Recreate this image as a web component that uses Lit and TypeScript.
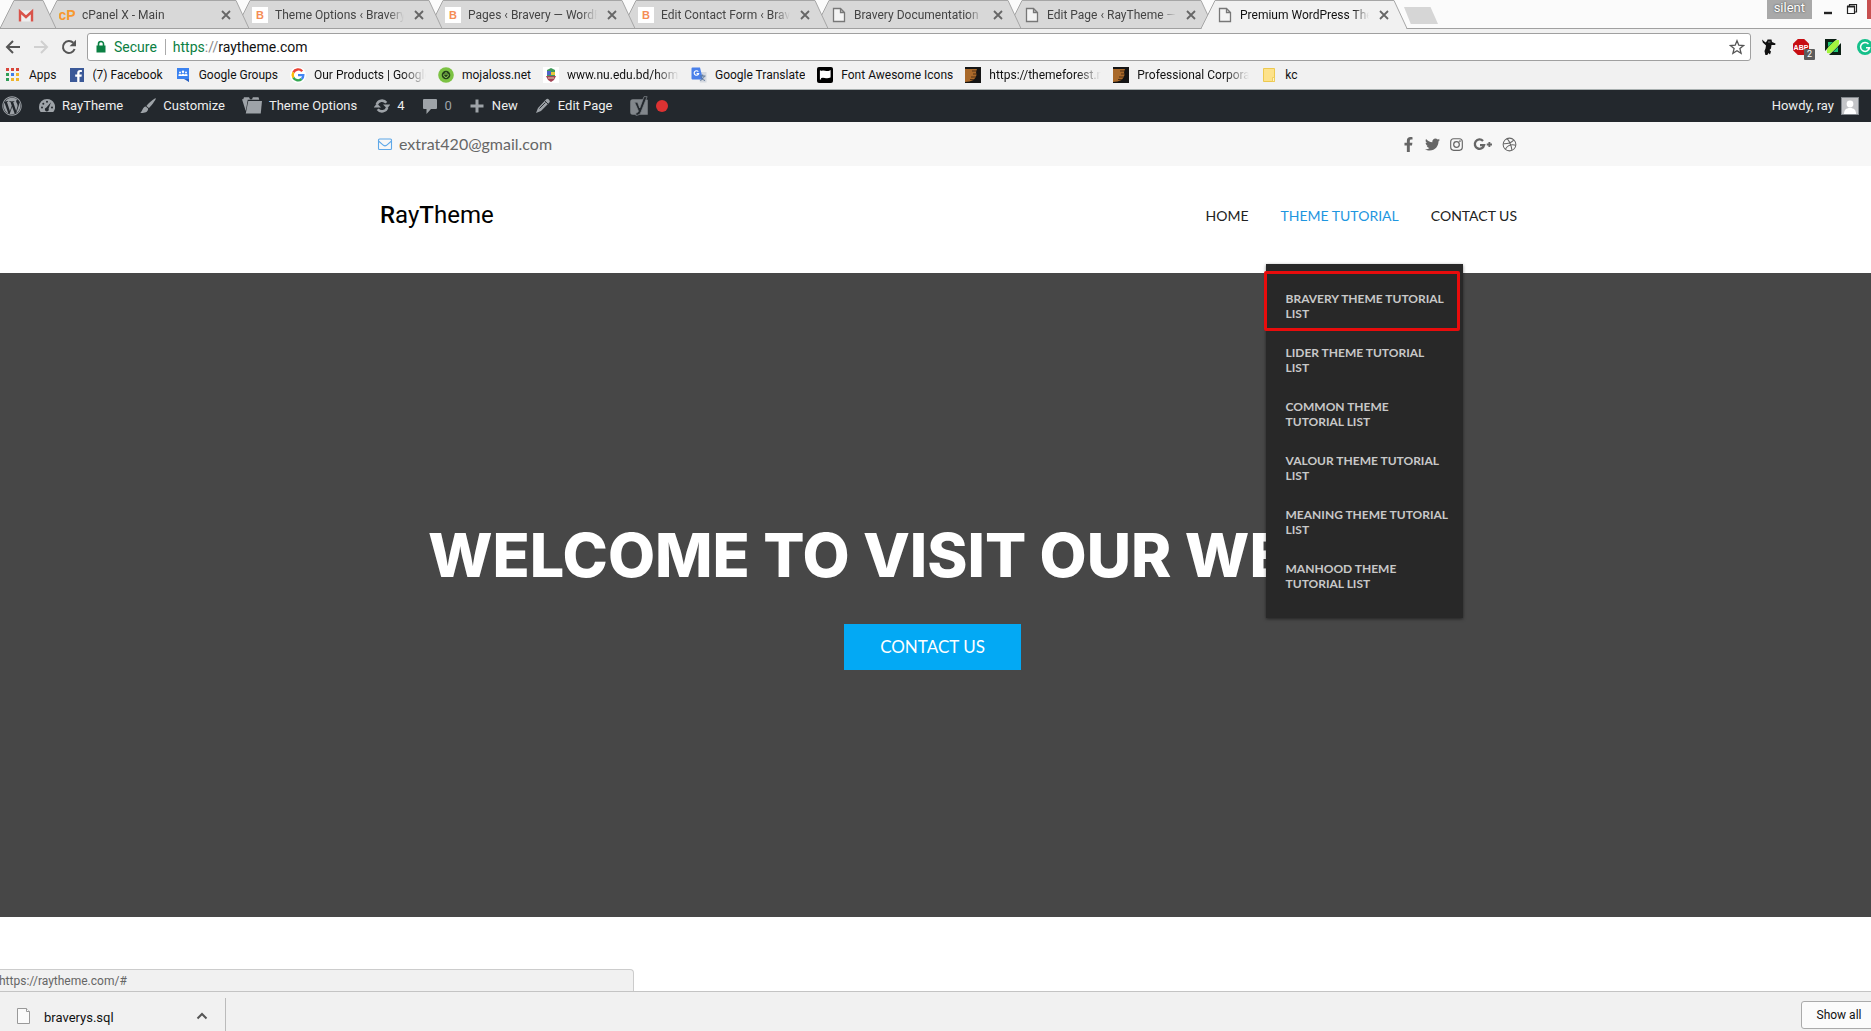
import { LitElement, html, svg, css, nothing } from "lit";
import { customElement, property } from "lit/decorators.js";
import { classMap } from "lit/directives/class-map.js";

const page = svg`<path d="M2.500 1.500h7l4 4v9h-11z M9.500 1.500v4h4" fill="#f4f4f4" stroke="#777" stroke-width="1.300"/>`;
const bravery = svg`<rect width="16" height="16" fill="#fff"/><text x="8" y="12" text-anchor="middle" font-size="11" font-weight="700" font-family="Liberation Sans, sans-serif" fill="#f58d55">B</text>`;
const forest = svg`<rect width="16" height="16" fill="#151515"/><path d="M0 2h12l-1 3 .5 3-1 2.500-2 2.500-4 1.500L0 15z" fill="#a9692a"/><path d="M7 4h5M8 7h4M6 10h5M5 12.500h4" stroke="#3a230f" stroke-width=".8"/>`;

const icons: Record<string, unknown> = {
  page,
  bravery,
  forest,
  gmail: svg`<path d="M1 2.500h14v11H1z" fill="#eee"/><path d="M2 13.500V3.500l6 5.500 6-5.500v10" fill="none" stroke="#d9534a" stroke-width="2.400"/>`,
  cpanel: svg`<text x="8" y="13" text-anchor="middle" font-size="14" font-weight="700" font-family="Liberation Sans, sans-serif" fill="#f7982f">cP</text>`,
  apps: svg`<g><path d="M1 1h3v3H1zM6 1h3v3H6zM11 1h3v3h-3z" fill="#d8453a"/><path d="M1 6h3v3H1z" fill="#2f9e57"/><path d="M6 6h3v3H6z" fill="#3f7de8"/><path d="M11 6h3v3h-3z" fill="#efb52c"/><path d="M1 11h3v3H1z" fill="#2f9e57"/><path d="M6 11h3v3H6zM11 11h3v3h-3z" fill="#efb52c"/></g>`,
  facebook: svg`<rect x="1" y="1" width="14" height="14" fill="#3b5998"/><path d="M10.500 15V9.700h2l.3-2.200h-2.300V6.200c0-.7.300-1.100 1.200-1.100h1.200v-2c-.3 0-1-.1-1.800-.1-1.800 0-2.900 1.100-2.900 3v1.500h-2v2.200h2V15z" fill="#fff"/>`,
  groups: svg`<path d="M2 1h12v14l-3-3H2z" fill="#3b82f0"/><path d="M9 12h5v3z" fill="#2b62c0"/><circle cx="5" cy="5.500" r="1" fill="#fff"/><circle cx="8" cy="4.800" r="1.200" fill="#fff"/><circle cx="11" cy="5.500" r="1" fill="#fff"/><path d="M3.500 9V7.400l1.500-.4 1.500.4L8 6.600l1.500.8L11 7l1.500.4V9z" fill="#fff"/>`,
  google: svg`<circle cx="8" cy="8" r="8" fill="#fff"/><g fill="none" stroke-width="2.400"><path d="M12.200 4.300A5.300 5.300 0 0 0 3.400 5.400" stroke="#ea4335"/><path d="M3.400 5.400a5.300 5.300 0 0 0 0 5.200" stroke="#fbbc05"/><path d="M3.400 10.600a5.300 5.300 0 0 0 8.200 1.400" stroke="#34a853"/><path d="M11.600 12a5 5 0 0 0 1.700-3.900H8" stroke="#4285f4"/></g>`,
  power: svg`<circle cx="8" cy="8" r="7.800" fill="#7cc243"/><circle cx="8" cy="8" r="4.300" fill="#25401a"/><path d="M6.500 6.600a2.200 2.200 0 1 0 3 0M8 5v3" fill="none" stroke="#9be05c" stroke-width="1"/>`,
  crest: svg`<rect width="16" height="16" fill="#fff"/><path d="M4 3l4-2 4 2v6H4z" fill="#3f9a5a"/><path d="M4 4h4v4H4z" fill="#4d62c8"/><path d="M8 5h4v3H8z" fill="#e8c53a"/><path d="M3 9h10l-2 4-3 2-3-2z" fill="#a34455"/><path d="M5 11h6" stroke="#f0d3b0" stroke-width="1"/>`,
  translate: svg`<path d="M7 5h8.500v10.500H9z" fill="#d5d9e0"/><path d="M1.500.5H9l3 12H1.500a1 1 0 0 1-1-1v-10a1 1 0 0 1 1-1z" fill="#4a80ea"/><path d="M7.300 4.600a2.300 2.300 0 1 0 .4 2H5.600" fill="none" stroke="#fff" stroke-width="1.100"/><path d="M9 9h5.500M11.700 7.500V9M13.300 9c-.5 2-2 3.600-4 4.500M10 10c.8 1.600 2 2.800 4 3.500" stroke="#5f7896" fill="none"/>`,
  flag: svg`<rect width="16" height="16" rx="2" fill="#000"/><path d="M3.500 3.500v9M4 4.500c3-1.500 5 1.300 9-.5v6c-4 1.800-6-1-9 .5z" fill="#fff" stroke="#fff" stroke-width="1.200"/>`,
  folder: svg`<path d="M2.500 1.500h11v13h-11z" fill="#fde28a" stroke="#edc94f"/><path d="M11.500 10.500h2v4h-2z" fill="#fff3c4" stroke="#edc94f" stroke-width=".8"/>`,
  back: svg`<path d="M15 8H2.500M8 2L2 8l6 6" fill="none" stroke="#555" stroke-width="2"/>`,
  forward: svg`<path d="M1 8h12.500M8 2l6 6-6 6" fill="none" stroke="#d0d0d0" stroke-width="2"/>`,
  reload: svg`<path d="M13.600 10A6 6 0 1 1 12.300 3.800" fill="none" stroke="#555" stroke-width="2"/><path d="M15 .8v6.400H8.600z" fill="#555"/>`,
  lock: svg`<rect x="3.500" y="6.500" width="9" height="7" fill="#0b8043"/><path d="M5.500 7V5a2.500 2.500 0 0 1 5 0v2" fill="none" stroke="#0b8043" stroke-width="1.600"/>`,
  star: svg`<path d="M8 1.700l1.800 4.500 4.800.3-3.700 3.100 1.200 4.700L8 11.700l-4.100 2.600 1.200-4.700L1.400 6.500l4.800-.3z" fill="none" stroke="#555" stroke-width="1.300"/>`,
  ninja: svg`<path d="M1 0.500l3.500 3L6 2l.5-1.500h4L11 3l3.500 1.500-.3 1.500-3.700 0-.5 3.500-1.500 1.500 1.500 1.500-1 3-1.500-1.500-1.500 2.500H4.500L3.500 12l1-2.500L5 6.500 1.800 3.500z" fill="#111"/><path d="M7 3h2.500" stroke="#999" stroke-width=".8"/>`,
  abp: svg`<path d="M4.800 0h6.400L16 4.800v6.400L11.200 16H4.800L0 11.200V4.800z" fill="#c70d12"/><text x="8" y="10.500" text-anchor="middle" font-size="7" font-weight="700" font-family="Liberation Sans, sans-serif" fill="#fff">ABP</text>`,
  feather: svg`<path d="M0 0h12L0 12z" fill="#0c2014"/><path d="M16 16H4L16 4z" fill="#0c2014"/><path d="M3 3h5L3 8z" fill="#1ec677"/><path d="M13 13H8l5-5z" fill="#1ec677"/><path d="M2 14c-.5-3 0-4.500 2-6.500L9 2.500C10.500 1 12 1 14 1c.3 3 0 5-2 7l-5 5c-1.500 1.500-3 1.500-5 1z" fill="#a4f53e"/>`,
  grammarly: svg`<circle cx="8" cy="8" r="8" fill="#15c08a"/><path d="M11.500 5a4.500 4.500 0 1 0 1 3.800H9M11 11l1.500-2.200" fill="none" stroke="#fff" stroke-width="1.500"/>`,
  minimize: svg`<path d="M4 12h8" stroke="#222" stroke-width="2.400"/>`,
  restore: svg`<path d="M3.500 5.500h7v7h-7zM5.500 5V3.500h7v7.500h-2" fill="none" stroke="#222" stroke-width="1.200"/><path d="M3 5.500h8" stroke="#222" stroke-width="2"/>`,
  close: svg`<path d="M4 4l8 8M12 4l-8 8" stroke="#666" stroke-width="1.800"/>`,
  chevron: svg`<path d="M3.500 10.500L8 6l4.500 4.500" fill="none" stroke="#555" stroke-width="2"/>`,
  sheet: svg`<path d="M1.500.5h9l3 3v12h-12z" fill="#fafafa" stroke="#999"/><path d="M10.500.5v3h3" fill="#fff" stroke="#999"/>`,
  dashboard: svg`<path d="M8 1a8 8 0 0 0-8 8c0 2 .7 3.800 1.700 5h12.600A8 8 0 0 0 8 1z" fill="#9ea3a8"/><g fill="#23282d"><circle cx="3" cy="9.500" r="1"/><circle cx="4.300" cy="5.800" r="1"/><circle cx="8" cy="3.800" r="1"/><circle cx="13" cy="9.500" r="1"/><path d="M12 4.300L9.600 10.500a2 2 0 1 1-2.200-1z"/></g>`,
  brush: svg`<path d="M15.800.3c.6.8-5.300 8.600-7 9.700L6.400 8C7.400 6.300 15-.5 15.800.3z" fill="#9ea3a8"/><path d="M5.700 8.600l2.400 2c.2 3-3 5.200-7.800 4.200C2.600 13.500 2.500 9 5.700 8.600z" fill="#9ea3a8"/>`,
  portfolio: svg`<path d="M0 2.500h1l.6-1.500h4l.8 1.500H8l.7-1.500h4.500l.6 2H4.600L3 12z" fill="#9ea3a8"/><path d="M5 4h11l-1 10H3z" fill="#9ea3a8"/>`,
  update: svg`<g fill="none" stroke="#9ea3a8" stroke-width="2.600"><path d="M2.800 6.500a5.400 5.400 0 0 1 9.500-1.700"/><path d="M13.200 9.500a5.400 5.400 0 0 1-9.500 1.700"/></g><path d="M9 6.500h7.500L13 10.500zM7 9.500H-.5L3 5.500z" fill="#9ea3a8"/>`,
  comment: svg`<path d="M2 1h12a1 1 0 0 1 1 1v8a1 1 0 0 1-1 1H9l-4.500 5V11H2a1 1 0 0 1-1-1V2a1 1 0 0 1 1-1z" fill="#9ea3a8"/>`,
  plus: svg`<path d="M8 1.500v13M1.500 8h13" stroke="#9ea3a8" stroke-width="3"/>`,
  pencil: svg`<path d="M11 1.500c1-1 2.200-.8 3 .2 1 .9 1.200 2 .2 3L6 13l-5 2 2-5z" fill="#9ea3a8"/><path d="M10 3l3 3M4.500 10.500l6-6" stroke="#23282d" stroke-width=".9"/>`,
  yoast: svg`<path d="M3 2.500h8.500L15 3v12H3a2 2 0 0 1-2-2V4.500a2 2 0 0 1 2-2z" fill="#82878c"/><path d="M12 .5h2.500L9.700 12.500c-.8 2-1.800 3-4.200 3v-2c1.300-.1 1.900-.8 2-1.600L4.500 5h2.300l1.800 4.600z" fill="#23282d" stroke="#82878c" stroke-width=".6"/>`,
  avatar: svg`<rect width="16" height="16" fill="#c3c4c7"/><circle cx="8" cy="6" r="3.400" fill="#fff"/><path d="M2 16c0-4 2-6 6-6s6 2 6 6z" fill="#fff"/>`,
  mail: svg`<rect x="1.500" y="3" width="13" height="10.500" rx="1" fill="none" stroke="#5fa8e8" stroke-width="1.100"/><path d="M1.500 5l5 4.300c1 .8 2 .8 3 0l5-4.300" fill="none" stroke="#5fa8e8" stroke-width="1.100"/>`,
  instagram: svg`<rect x="1.800" y="1.800" width="12.400" height="12.400" rx="3.200" fill="none" stroke="#666" stroke-width="1.200"/><circle cx="8" cy="8" r="3" fill="none" stroke="#666" stroke-width="1.300"/><circle cx="11.700" cy="4.300" r=".9" fill="#666"/>`,
  dribbble: svg`<g fill="none" stroke="#666" stroke-width="1.100"><circle cx="8" cy="8" r="6.800"/><path d="M5.500 1.800c2.700 3.200 4.400 7 5 12M1.300 7.200c4.400.2 8-.6 11.200-3.900M3.600 13C5.700 9.200 9.800 7.500 14.700 8.700"/></g>`,
};

const large: Record<string, { box: string; body: unknown }> = {
  wordpress: {
    box: "0 0 512 512",
    body: svg`<path fill="#9ea3a8" d="M61.700 169.400l101.500 278C92.200 413 43.300 340.200 43.300 256c0-30.900 6.600-60.100 18.400-86.600zm337.900 75.900c0-26.300-9.400-44.500-17.500-58.700-10.800-17.500-20.900-32.400-20.900-49.900 0-19.600 14.800-37.800 35.700-37.800.9 0 1.800.1 2.800.2-37.900-34.700-88.300-55.900-143.700-55.900-74.300 0-139.700 38.100-177.800 95.900 5 .2 9.700.3 13.700.3 22.200 0 56.700-2.700 56.700-2.700 11.500-.7 12.800 16.200 1.400 17.500 0 0-11.500 1.300-24.300 2l77.500 230.400L249.800 247l-33.100-90.800c-11.500-.7-22.300-2-22.300-2-11.500-.7-10.100-18.200 1.300-17.500 0 0 35.100 2.700 56 2.700 22.200 0 56.700-2.700 56.700-2.700 11.500-.7 12.800 16.200 1.400 17.500 0 0-11.500 1.300-24.300 2l76.900 228.700 21.200-70.900c9-29.400 16-50.500 16-68.700zm-139.900 29.300l-63.800 185.500c19.100 5.600 39.200 8.700 60.100 8.700 24.800 0 48.500-4.300 70.600-12.100-.6-.9-1.100-1.900-1.500-2.900l-65.400-179.200zm183-120.700c.9 6.800 1.400 14 1.400 21.900 0 21.600-4 45.800-16.200 76.200l-65 187.900C426.200 403 468.700 334.500 468.700 256c0-37-9.400-71.800-26-102.100zM504 256c0 136.800-111.300 248-248 248C119.200 504 8 392.700 8 256 8 119.200 119.200 8 256 8c136.700 0 248 111.200 248 248zm-24 0c0-123.700-100.300-224-224-224S32 132.300 32 256s100.300 224 224 224 224-100.300 224-224z"/>`,
  },
  fb: {
    box: "-96 0 512 512",
    body: svg`<path fill="#666" d="M279.140 288l14.220-92.660h-88.910v-60.130c0-25.350 12.420-50.060 52.240-50.060h40.420V6.260S260.430 0 225.360 0c-73.220 0-121.080 44.380-121.080 124.720v70.620H22.890V288h81.390v224h100.170V288z"/>`,
  },
  twitter: {
    box: "0 0 512 512",
    body: svg`<path fill="#666" d="M459.370 151.716c.325 4.548.325 9.097.325 13.645 0 138.720-105.583 298.558-298.558 298.558-59.452 0-114.680-17.219-161.137-47.106 8.447.974 16.568 1.299 25.340 1.299 49.055 0 94.213-16.568 130.274-44.832-46.132-.975-84.792-31.188-98.112-72.772 6.498.974 12.995 1.624 19.818 1.624 9.421 0 18.843-1.300 27.614-3.573-48.081-9.747-84.143-51.980-84.143-102.985v-1.299c13.969 7.797 30.214 12.670 47.431 13.319-28.264-18.843-46.781-51.005-46.781-87.391 0-19.492 5.197-37.360 14.294-52.954 51.655 63.675 129.300 105.258 216.365 109.807-1.624-7.797-2.599-15.918-2.599-24.040 0-57.828 46.782-104.934 104.934-104.934 30.213 0 57.502 12.670 76.670 33.137 23.715-4.548 46.456-13.320 66.599-25.340-7.798 24.366-24.366 44.833-46.132 57.827 21.117-2.273 41.584-8.122 60.426-16.243-14.292 20.791-32.161 39.308-52.628 54.253z"/>`,
  },
  gplus: {
    box: "0 0 20 16",
    body: svg`<path d="M10 4.200A5 5 0 1 0 11.200 8.600H6.800" fill="none" stroke="#666" stroke-width="2.500"/><path d="M16.800 5.300v5.400M14 8h5.600" stroke="#666" stroke-width="2"/>`,
  },
};

const icon = (name: string, cls = "icon") => {
  const big = large[name];
  return html`<svg class=${cls} viewBox=${big ? big.box : "0 0 16 16"} aria-hidden="true">${big ? big.body : icons[name]}</svg>`;
};

interface Tab { icon: string; label?: string; active?: boolean }

const tabs: Tab[] = [
  { icon: "gmail" },
  { icon: "cpanel", label: "cPanel X - Main" },
  { icon: "bravery", label: "Theme Options ‹ Bravery" },
  { icon: "bravery", label: "Pages ‹ Bravery — WordPress" },
  { icon: "bravery", label: "Edit Contact Form ‹ Bravery" },
  { icon: "page", label: "Bravery Documentation" },
  { icon: "page", label: "Edit Page ‹ RayTheme —" },
  { icon: "page", label: "Premium WordPress Theme", active: true },
];

const bookmarks: [string, string][] = [
  ["apps", "Apps"],
  ["facebook", "(7) Facebook"],
  ["groups", "Google Groups"],
  ["google", "Our Products | Google"],
  ["power", "mojaloss.net"],
  ["crest", "www.nu.edu.bd/home"],
  ["translate", "Google Translate"],
  ["flag", "Font Awesome Icons"],
  ["forest", "https://themeforest.net"],
  ["forest", "Professional Corporate"],
  ["folder", "kc"],
];

const tutorials = [
  ["Bravery Theme Tutorial", "List"],
  ["Lider Theme Tutorial", "List"],
  ["Common Theme", "Tutorial List"],
  ["Valour Theme Tutorial", "List"],
  ["Meaning Theme Tutorial", "List"],
  ["Manhood Theme", "Tutorial List"],
];

const base = css`
  * { box-sizing: border-box; }
  :host { display: block; }
  a { color: inherit; text-decoration: none; }
  button { font: inherit; color: inherit; background: none; border: 0; padding: 0; }
  .icon { width: 16px; height: 16px; flex: none; display: block; }
`;

const system = css`
  :host { font: 12px/16px Roboto, "Noto Sans", sans-serif; color: #111; }
`;

@customElement("browser-tab")
class BrowserTab extends LitElement {
  @property({ attribute: false }) tab!: Tab;

  static styles = [base, system, css`
    :host { height: 29px; flex: 0 1 206px; min-width: 0; margin-right: -13px; position: relative; }
    :host([pinned]) { flex: 0 0 56px; }
    .shape { position: absolute; inset: 0; width: 100%; height: 100%; overflow: visible; }
    .row { position: relative; display: flex; align-items: center; gap: 7px; height: 100%; padding: 0 15px 0 16px; }
    .pinned { justify-content: center; padding: 2px 4px 0 0; }
    .label { flex: 1; min-width: 0; overflow: hidden; white-space: nowrap; color: #444; -webkit-mask: linear-gradient(to left, transparent, #000 16px); mask: linear-gradient(to left, transparent, #000 16px); }
    .active .label { color: #111; }
  `];

  render() {
    const { icon: name, label, active } = this.tab;
    const w = label ? 206 : 56;
    return html`
      <svg class="shape" viewBox="0 0 ${w} 29" preserveAspectRatio="none" aria-hidden="true">
        <path d="M0 28.500L14 .5H${w - 13}L${w} 28.500" fill=${active ? "#f1f1f1" : "#d8d8d8"} stroke="#a6a6a6"></path>
        ${active ? svg`<path d="M1 29H${w - 1}" stroke="#f1f1f1" stroke-width="2"/>` : svg`<path d="M0 28.500H${w}" stroke="#a0a0a0"/>`}
      </svg>
      <div class=${classMap({ row: true, pinned: !label, active: !!active })}>
        ${icon(name)}
        ${label ? html`<span class="label">${label}</span><button aria-label="Close tab">${icon("close")}</button>` : nothing}
      </div>`;
  }
}

@customElement("browser-chrome")
class BrowserChrome extends LitElement {
  static styles = [base, system, css`
    :host { background: #f1f1f1; border-bottom: 1px solid #a9b0b0; }
    .tabs { display: flex; height: 29px; background: #fbfbfb; border-bottom: 1px solid #a0a0a0; }
    .strip { display: flex; flex: 0 1 1420px; min-width: 0; height: 29px; }
    .strip browser-tab { z-index: var(--layer); }
    .new { width: 34px; height: 17px; margin: 7px 0 0 -16px; background: #d6d6d6; clip-path: polygon(0 0, 78% 0, 100% 100%, 20% 100%); }
    .window { display: flex; margin-left: auto; align-items: flex-start; }
    .user { background: #a9a9a9; color: #fff; text-shadow: 0 0 2px #333; font-size: 13px; padding: 0 7px 3px; }
    .window .ctl { margin: 1px 0 0 8px; }
    .shut { width: 4px; height: 19px; margin-left: 7px; background: #c75050; }
    .bar { display: flex; align-items: center; padding-top: 4px; height: 32px; }
    .nav { display: flex; gap: 12px; padding: 0 10px 0 5px; }
    .omni { flex: 1; display: flex; align-items: center; height: 28px; background: #fff; border: 1px solid #a0a0a0; border-radius: 3px; font-size: 14px; padding: 0 5px; }
    .secure { color: #0b8043; margin-left: 5px; padding-right: 8px; border-right: 1px solid #aaa; }
    .scheme { color: #0b8043; margin-left: 7px; }
    .sep { color: #888; }
    .url { flex: 1; min-width: 0; border: 0; padding: 0; font: inherit; color: #111; outline: none; background: none; }
    .ext { display: flex; gap: 16px; padding-left: 10px; width: 120px; overflow: hidden; height: 28px; align-items: center; }
    .ext button { position: relative; }
    .count { position: absolute; right: -6px; bottom: -5px; background: #5c5c5c; color: #fff; font-size: 9px; line-height: 11px; padding: 0 3px; border-radius: 1px; }
    .marks { display: flex; gap: 12px; height: 28px; align-items: center; padding: 0 5px; overflow: hidden; }
    .mark { display: flex; gap: 8px; align-items: center; white-space: nowrap; }
    .mark span { max-width: 112px; overflow: hidden; }
    .fade { -webkit-mask: linear-gradient(to left, transparent, #000 24px); mask: linear-gradient(to left, transparent, #000 24px); }
  `];

  render() {
    return html`
      <div class="tabs">
        <div class="strip">
          ${tabs.map((t, i) => html`<browser-tab .tab=${t} ?pinned=${!t.label} style="--layer:${t.active ? 20 : 10 - i}"></browser-tab>`)}
        </div>
        <button class="new" aria-label="New tab"></button>
        <div class="window">
          <button class="user">silent</button>
          <button class="ctl" aria-label="Minimize">${icon("minimize")}</button>
          <button class="ctl" aria-label="Restore">${icon("restore")}</button>
          <button class="shut" aria-label="Close"></button>
        </div>
      </div>
      <div class="bar">
        <div class="nav">
          <button aria-label="Back">${icon("back")}</button>
          <button aria-label="Forward">${icon("forward")}</button>
          <button aria-label="Reload">${icon("reload")}</button>
        </div>
        <div class="omni">
          ${icon("lock")}<span class="secure">Secure</span>
          <span class="scheme">https</span><span class="sep">://</span>
          <input class="url" aria-label="Address" .value=${"raytheme.com"} />
          <button aria-label="Bookmark this page">${icon("star")}</button>
        </div>
        <div class="ext">
          <button aria-label="Ninja">${icon("ninja")}</button>
          <button aria-label="Adblock">${icon("abp")}<span class="count">2</span></button>
          <button aria-label="Feather">${icon("feather")}</button>
          <button aria-label="Grammar">${icon("grammarly")}</button>
        </div>
      </div>
      <nav class="marks" aria-label="Bookmarks">
        ${bookmarks.map(([i, t]) => html`<a class="mark" href="#">${icon(i)}<span class=${t.length > 17 && i !== "flag" ? "fade" : ""}>${t}</span></a>`)}
      </nav>`;
  }
}

@customElement("admin-bar")
class AdminBar extends LitElement {
  static styles = [base, css`
    :host { background: #23282d; color: #eee; font: 13px/32px Roboto, "Noto Sans", sans-serif; }
    nav { display: flex; height: 32px; padding: 0 12px 0 2px; gap: 17px; align-items: center; white-space: nowrap; }
    a { display: flex; align-items: center; gap: 7px; }
    .wp { width: 20px; height: 20px; }
    .dim { color: #9ea3a8; }
    .dot { width: 12px; height: 12px; border-radius: 50%; background: #dc3232; }
    .me { margin-left: auto; }
    .face { width: 18px; height: 18px; border: 1px solid #82878c; }
  `];

  render() {
    return html`<nav aria-label="Toolbar">
      <a href="#" aria-label="About WordPress">${icon("wordpress", "wp")}</a>
      <a href="#">${icon("dashboard")}RayTheme</a>
      <a href="#">${icon("brush")}Customize</a>
      <a href="#">${icon("portfolio", "wp")}Theme Options</a>
      <a href="#">${icon("update")}4</a>
      <a href="#" class="dim">${icon("comment")}0</a>
      <a href="#">${icon("plus")}New</a>
      <a href="#">${icon("pencil")}Edit Page</a>
      <a href="#" aria-label="SEO">${icon("yoast", "wp")}<span class="dot"></span></a>
      <a href="#" class="me">Howdy, ray${icon("avatar", "face")}</a>
    </nav>`;
  }
}

@customElement("site-page")
class SitePage extends LitElement {
  static styles = [base, css`
    :host { font: 14px/20px Lato, "Open Sans", sans-serif; color: #222; background: #fff; }
    .wrap { display: flex; align-items: center; justify-content: space-between; width: 1140px; max-width: 100%; margin: 0 auto; }
    .top, .head { padding-left: 23px; }
    .top { background: #f7f7f7; color: #666; }
    .top .wrap { height: 44px; }
    .mail { display: flex; gap: 6px; align-items: center; font-size: 16px; }
    .social { display: flex; gap: 9px; }
    .social .s { width: 15px; height: 15px; display: block; }
    .social .g { width: 20px; height: 15px; display: block; }
    .head .wrap { height: 107px; padding: 0 0 10px 3px; }
    .logo { font: 24px/32px Roboto, sans-serif; color: #000; }
    .logo b { font-weight: 500; }
    .menu { display: flex; gap: 32px; text-transform: uppercase; padding-top: 2px; }
    .item { position: relative; }
    .on { color: #1e96e0; }
    .drop { position: absolute; z-index: 2; top: 58px; left: -15px; width: 197px; padding: 15px 0; background: #282828; color: #c8c8c8; font-size: 12px; font-weight: 700; line-height: 15px; box-shadow: 0 1px 3px rgba(0, 0, 0, .5); }
    .drop a { display: block; padding: 12px 20px; white-space: nowrap; }
    .mark { position: absolute; top: 7px; left: -2px; width: 196px; height: 60px; border: 3px solid #e80c0c; border-radius: 2px; pointer-events: none; }
    .hero { display: flex; flex-direction: column; align-items: center; gap: 33px; padding: 246px 6px 247px 0; background: #474747; color: #fff; overflow: hidden; }
    h1 { margin: 0; width: 1009px; max-width: 100%; white-space: nowrap; font: 800 61px/72px Inter, sans-serif; text-transform: uppercase; }
    .cta { display: block; width: 177px; height: 46px; background: #03a9f4; font-size: 17px; line-height: 46px; text-align: center; text-transform: uppercase; }
  `];

  render() {
    return html`
      <div class="top"><div class="wrap">
        <a class="mail" href="#">${icon("mail")}extrat420@gmail.com</a>
        <div class="social">
          <a href="#" aria-label="Facebook">${icon("fb", "s")}</a>
          <a href="#" aria-label="Twitter">${icon("twitter", "s")}</a>
          <a href="#" aria-label="Instagram">${icon("instagram", "s")}</a>
          <a href="#" aria-label="Google Plus">${icon("gplus", "g")}</a>
          <a href="#" aria-label="Dribbble">${icon("dribbble", "s")}</a>
        </div>
      </div></div>
      <header class="head"><div class="wrap">
        <a class="logo" href="#"><b>R</b>ay<b>T</b>heme</a>
        <nav class="menu" aria-label="Main">
          <a href="#">Home</a>
          <div class="item">
            <a class="on" href="#">Theme Tutorial</a>
            <div class="drop">
              ${tutorials.map(([a, b]) => html`<a href="#">${a}<br />${b}</a>`)}
              <div class="mark"></div>
            </div>
          </div>
          <a href="#">Contact Us</a>
        </nav>
      </div></header>
      <section class="hero">
        <h1>Welcome to visit our website</h1>
        <a class="cta" href="#">Contact Us</a>
      </section>`;
  }
}

@customElement("download-shelf")
class DownloadShelf extends LitElement {
  static styles = [base, system, css`
    :host { position: relative; }
    .status { position: absolute; left: -2px; bottom: 100%; width: 636px; height: 22px; padding-top: 3px; background: #f1f1f1; border: 1px solid #ccc; border-bottom: 0; border-radius: 0 4px 0 0; color: #666; }
    .shelf { display: flex; height: 40px; background: #f1f1f1; border-top: 1px solid #c4c4c4; overflow: hidden; }
    .file { display: flex; align-items: center; gap: 12px; width: 226px; margin-top: 6px; padding: 2px 15px 0 16px; border-right: 1px solid #bbb; font-size: 13px; }
    .file .name { flex: 1; padding-top: 4px; }
    .all { margin: 9px -6px 0 auto; width: 76px; height: 28px; background: #fbfbfb; border: 1px solid #aaa; border-radius: 3px; }
  `];

  render() {
    return html`
      <div class="status">https://raytheme.com/#</div>
      <div class="shelf">
        <div class="file">${icon("sheet")}<span class="name">braverys.sql</span><button aria-label="File options">${icon("chevron")}</button></div>
        <button class="all">Show all</button>
      </div>`;
  }
}

@customElement("app-root")
class AppRoot extends LitElement {
  static styles = css`
    :host { display: flex; flex-direction: column; min-height: 100vh; background: #fff; overflow: hidden; }
    site-page { flex: 1 0 auto; margin-bottom: 74px; }
    download-shelf, admin-bar, browser-chrome { flex: none; }
  `;

  render() {
    return html`
      <browser-chrome></browser-chrome>
      <admin-bar></admin-bar>
      <site-page></site-page>
      <download-shelf></download-shelf>`;
  }
}
